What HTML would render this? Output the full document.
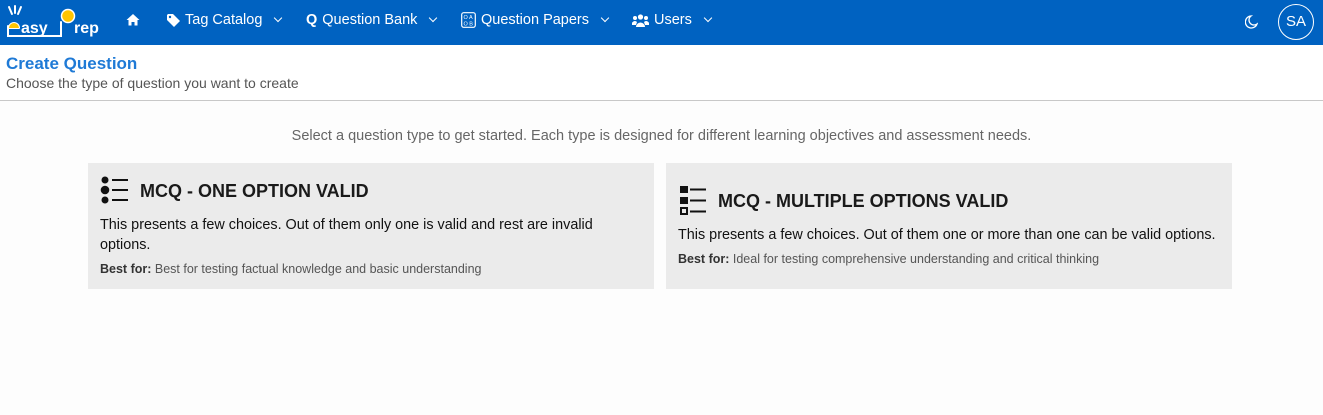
<!DOCTYPE html>
<html><head><meta charset="utf-8"><style>
*{box-sizing:border-box;margin:0;padding:0}
body{width:1323px;height:415px;background:#fdfdfd;font-family:"Liberation Sans",sans-serif;overflow:hidden;position:relative}
.nav{position:absolute;left:0;top:0;width:1323px;height:45px;background:#0062c1;color:#fff}
.nav .it{position:absolute;top:12px;font-size:14.5px;display:flex;align-items:center;gap:5px;white-space:nowrap}
.chev{display:inline-block;width:6px;height:6px;border-right:1.3px solid #fff;border-bottom:1.3px solid #fff;transform:rotate(45deg);margin-left:8px;margin-top:-4px}
.hdr{position:absolute;left:0;top:45px;width:1323px;height:56px;border-bottom:1px solid #c8c8c8;background:#fff}
.card{position:absolute;top:163px;width:566px;height:126px;background:#ebebeb}
.card h3{position:absolute;font-size:18px;font-weight:bold;color:#1a1a1a;white-space:nowrap}
.card p{position:absolute;left:12px;font-size:14.4px;color:#111;line-height:20px}
.card .bf{position:absolute;left:12px;font-size:12.5px;color:#555;white-space:nowrap}
.card .bf b{color:#333}
</style></head><body>
<div class="nav">
  <svg style="position:absolute;left:6px;top:5px" width="100" height="36" viewBox="0 0 100 36">
    <g stroke="#fff" stroke-width="2" fill="none" stroke-linecap="round">
      <line x1="3" y1="2" x2="6" y2="9"/><line x1="9" y1="1" x2="9" y2="8"/><line x1="15" y1="2" x2="12" y2="9"/>
      <path d="M3 23 H13 M3 23 a5 5 0 1 1 10 0"/><path d="M2 21 V31 H55 V17"/>
    </g>
    <path d="M3 23 a5 5 0 0 1 10 0 Z" fill="#ffc400"/>
    <circle cx="62" cy="11" r="6.5" fill="#ffc400" stroke="#fff" stroke-width="1.5"/>
    <text x="15" y="28" fill="#fff" font-family="Liberation Sans" font-weight="bold" font-size="16">asy</text>
    <text x="68" y="28" fill="#fff" font-family="Liberation Sans" font-weight="bold" font-size="16">rep</text>
  </svg>
  <div class="it" style="left:126px;top:13px"><svg width="14" height="13" viewBox="0 0 14 13"><path d="M7 1 L0.5 7 H2.5 V12.5 H5.5 V9 H8.5 V12.5 H11.5 V7 H13.5 Z" fill="#fff"/></svg></div>
  <div class="it" style="left:167px"><svg width="13" height="13" viewBox="0 0 13 13"><path d="M0 1 V6 L7 13 L13 7 L6 0 H1 Z" fill="#fff"/><circle cx="3" cy="3" r="1.2" fill="#0062c1"/></svg>Tag Catalog<span class="chev"></span></div>
  <div class="it" style="left:306px"><b>Q</b>Question Bank<span class="chev"></span></div>
  <div class="it" style="left:461px"><svg width="15" height="16" viewBox="0 0 15 16"><rect x="0.7" y="0.7" width="13.6" height="14.6" rx="2" fill="none" stroke="#fff" stroke-width="1.2"/><text x="2.5" y="7" font-size="5.5" fill="#fff" font-family="Liberation Sans">O A</text><text x="2.5" y="13.5" font-size="5.5" fill="#fff" font-family="Liberation Sans">O B</text></svg>Question Papers<span class="chev"></span></div>
  <div class="it" style="left:632px"><svg width="17" height="13" viewBox="0 0 17 13"><circle cx="8.5" cy="3" r="2.6" fill="#fff"/><circle cx="3" cy="4" r="2" fill="#fff"/><circle cx="14" cy="4" r="2" fill="#fff"/><path d="M4 13 a4.5 4.5 0 0 1 9 0 Z M0 11 a3 3 0 0 1 5 -3 L4 11 Z M17 11 a3 3 0 0 0 -5 -3 L13 11 Z" fill="#fff"/></svg>Users<span class="chev"></span></div>
  <svg style="position:absolute;left:1245px;top:15px" width="13" height="14" viewBox="0 0 13 14"><path d="M6 1 a6 6 0 1 0 6 8 a5 5 0 0 1 -6 -8 Z" fill="none" stroke="#fff" stroke-width="1.3"/></svg>
  <div style="position:absolute;left:1278px;top:4px;width:36px;height:36px;border:1.3px solid #fff;border-radius:50%;text-align:center;line-height:34px;font-size:15px;color:#fff">SA</div>
</div>
<div class="hdr">
  <div style="position:absolute;left:6px;top:9px;font-size:17px;font-weight:bold;color:#1f7ad6">Create Question</div>
  <div style="position:absolute;left:6px;top:30px;font-size:14px;color:#555">Choose the type of question you want to create</div>
</div>
<div style="position:absolute;left:0;width:1323px;top:128px;text-align:center;font-size:14.5px;color:#666">Select a question type to get started. Each type is designed for different learning objectives and assessment needs.</div>
<div class="card" style="left:88px">
  <svg style="position:absolute;left:12px;top:13px" width="29" height="30" viewBox="0 0 29 30"><g fill="#111"><circle cx="5" cy="4" r="3.5"/><circle cx="5" cy="14" r="4.3"/><circle cx="5" cy="24" r="3.5"/><rect x="12" y="3" width="16" height="2"/><rect x="12" y="13" width="16" height="2"/><rect x="12" y="23" width="16" height="2"/></g></svg>
  <h3 style="left:52px;top:18px">MCQ - ONE OPTION VALID</h3>
  <p style="top:52px;width:510px">This presents a few choices. Out of them only one is valid and rest are invalid options.</p>
  <div class="bf" style="top:99px"><b>Best for:</b> Best for testing factual knowledge and basic understanding</div>
</div>
<div class="card" style="left:666px">
  <svg style="position:absolute;left:14px;top:22px" width="27" height="32" viewBox="0 0 27 32"><g fill="#111"><rect x="0" y="1" width="8" height="7"/><rect x="0" y="12" width="8" height="7"/><rect x="10" y="3.5" width="16" height="2"/><rect x="10" y="14.5" width="16" height="2"/><rect x="10" y="25.5" width="16" height="2"/></g><rect x="1" y="23" width="6" height="6" fill="none" stroke="#111" stroke-width="2"/></svg>
  <h3 style="left:52px;top:28px">MCQ - MULTIPLE OPTIONS VALID</h3>
  <p style="top:62px;white-space:nowrap">This presents a few choices. Out of them one or more than one can be valid options.</p>
  <div class="bf" style="top:89px"><b>Best for:</b> Ideal for testing comprehensive understanding and critical thinking</div>
</div>
</body></html>
